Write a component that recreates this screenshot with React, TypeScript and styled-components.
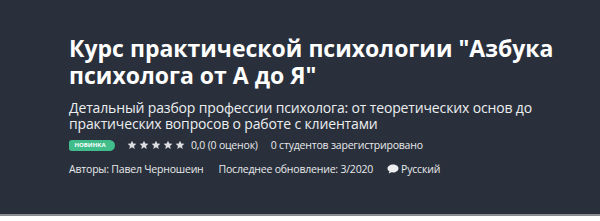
import React from 'react';
import styled, { createGlobalStyle } from 'styled-components';

const GlobalStyle = createGlobalStyle`
  html, body {
    margin: 0;
    padding: 0;
    background: #ffffff;
  }
  body {
    font-family: "Open Sans", "Noto Sans", sans-serif;
  }
`;

const Banner = styled.header`
  background: #29303b;
  height: 216px;
  border-bottom: 2px solid #8a8d92;
  box-sizing: border-box;
  padding: 35px 30px 0 69px;
  color: #fff;
`;

const Title = styled.h1`
  margin: 0;
  font-size: 23px;
  line-height: 27px;
  font-weight: 700;
  color: #ffffff;
`;

const Subtitle = styled.p`
  margin: 11px 0 0;
  font-size: 14px;
  line-height: 16px;
  letter-spacing: -0.15px;
  font-weight: 400;
  color: #eceef0;
`;

const Row = styled.div<{ $top: number }>`
  display: flex;
  align-items: center;
  height: 16px;
  margin-top: ${(p) => p.$top}px;
  font-size: 10.5px;
  line-height: 16px;
  letter-spacing: -0.2px;
  color: #e8e9eb;
`;

const Badge = styled.span`
  display: inline-flex;
  align-items: center;
  justify-content: center;
  width: 46px;
  height: 11px;
  box-sizing: border-box;
  padding-right: 4px;
  background: #41bd8b;
  color: #fff;
  font-size: 6px;
  font-weight: 700;
  letter-spacing: 0;
  border-radius: 3px 6px 6px 3px;
  margin-right: 12px;
`;

const Stars = styled.span`
  display: inline-flex;
  gap: 2px;
  margin-right: 6px;
`;

const Item = styled.span<{ $gap?: number }>`
  display: inline-flex;
  align-items: center;
  margin-right: ${(p) => p.$gap ?? 13}px;
`;

const Star = () => (
  <svg width="10" height="10" viewBox="0 0 24 24">
    <path
      fill="#dcdde0"
      d="M12 1.5l3.1 6.9 7.4.7-5.6 5 1.7 7.4L12 17.6l-6.6 3.9 1.7-7.4-5.6-5 7.4-.7z"
    />
  </svg>
);

const Bubble = () => (
  <svg width="12" height="10" viewBox="0 0 24 20" style={{ marginRight: 2 }}>
    <path
      fill="#eceef0"
      d="M12 1C5.9 1 1 4.5 1 8.8c0 2.4 1.5 4.5 3.9 5.9L3.4 19l5.6-2.5c1 .2 2 .3 3 .3 6.1 0 11-3.5 11-8S18.1 1 12 1z"
    />
  </svg>
);

export default function App() {
  return (
    <>
      <GlobalStyle />
      <Banner>
        <Title>
          Курс практической психологии "Азбука психолога от А до Я"
        </Title>
        <Subtitle>
          Детальный разбор профессии психолога: от теоретических основ до
          практических вопросов о работе с клиентами
        </Subtitle>
        <Row $top={5}>
          <Badge>НОВИНКА</Badge>
          <Stars>
            {[0, 1, 2, 3, 4].map((i) => (
              <Star key={i} />
            ))}
          </Stars>
          <Item>0,0 (0 оценок)</Item>
          <Item>0 студентов зарегистрировано</Item>
        </Row>
        <Row $top={8}>
          <Item $gap={15}>Авторы: Павел Черношеин</Item>
          <Item $gap={14}>Последнее обновление: 3/2020</Item>
          <Item>
            <Bubble />
            Русский
          </Item>
        </Row>
      </Banner>
    </>
  );
}
